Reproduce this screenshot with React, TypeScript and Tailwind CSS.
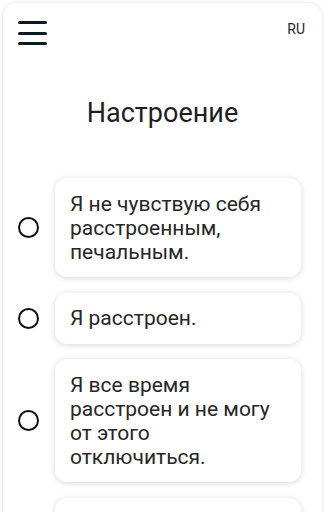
const options = [
  "Я не чувствую себя расстроенным, печальным.",
  "Я расстроен.",
  "Я все время расстроен и не могу от этого отключиться.",
  "Я настолько расстроен и несчастлив, что не могу это выдержать.",
];

export default function App() {
  return (
    <div className="min-h-[512px] bg-white px-[3px] pt-[3px] font-['Roboto',sans-serif]">
      <div className="min-h-[509px] rounded-t-[14px] bg-white shadow-[0_0_4px_rgba(0,0,0,0.14)]">
        {/* Header */}
        <div className="flex items-start justify-between pl-[15px] pr-[17px] pt-[18px]">
          <button className="flex w-[29px] flex-col gap-[7.5px]">
            <span className="block h-[3px] w-full rounded-full bg-[#0b1a22]" />
            <span className="block h-[3px] w-full rounded-full bg-[#0b1a22]" />
            <span className="block h-[3px] w-full rounded-full bg-[#0b1a22]" />
          </button>
          <span className="-mt-[1px] text-[14px] leading-[18px] text-[#2a2a2a]">RU</span>
        </div>

        <h1 className="mt-[52px] text-center text-[27px] leading-[32px] text-[#1e1e1e]">Настроение</h1>

        {/* Options */}
        <div className="mt-[49px] flex flex-col gap-[15.5px] pb-4 pl-[15px] pr-[21px]">
          {options.map((text) => (
            <label key={text} className="flex items-center gap-[16px]">
              <span className="block h-[21px] w-[21px] shrink-0 rounded-full border-2 border-[#111]" />
              <span className="flex-1 rounded-[12px] bg-white py-[13.5px] pl-[15px] pr-[16px] text-[21px] leading-[24px] text-[#262626] shadow-[0_1px_6px_rgba(0,0,0,0.16)]">
                {text}
              </span>
            </label>
          ))}
        </div>
      </div>
    </div>
  );
}
